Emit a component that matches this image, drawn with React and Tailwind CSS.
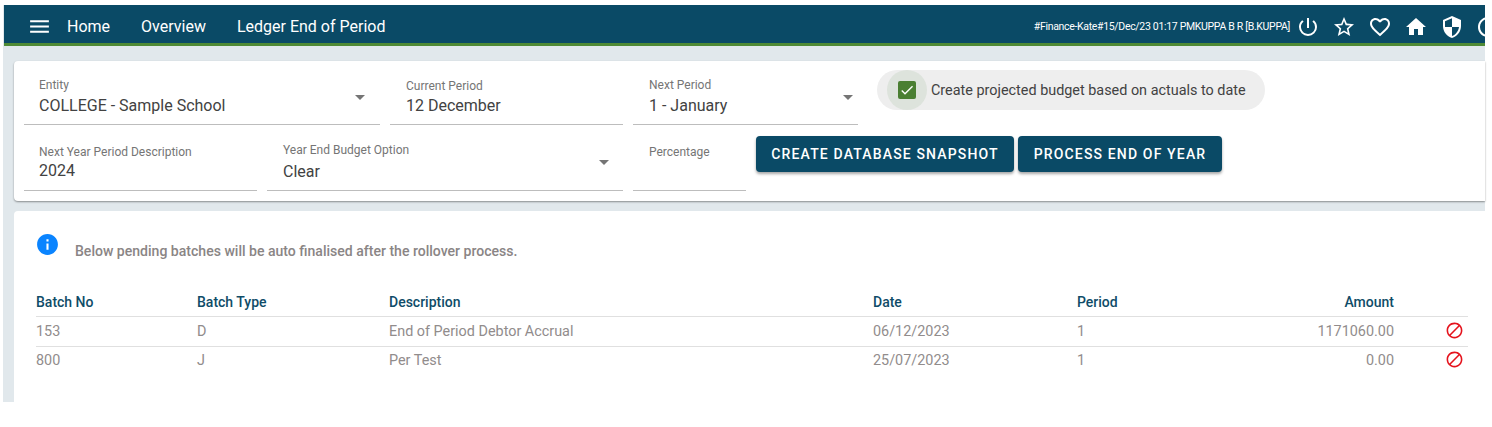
import { MdMenu, MdPowerSettingsNew, MdStarBorder, MdFavoriteBorder, MdHome, MdSecurity, MdAccessTime, MdArrowDropDown, MdInfo, MdBlock, MdCheck } from "react-icons/md";

const ROWS = [
  { no: "153", type: "D", desc: "End of Period Debtor Accrual", date: "06/12/2023", period: "1", amount: "1171060.00" },
  { no: "800", type: "J", desc: "Per Test", date: "25/07/2023", period: "1", amount: "0.00" },
];

function Field({ label, value, width, select, inset = "pl-[16px]", labelTop = "pt-[9px]", valueTop = "mt-[4px]", arrowPos = "top-[16px] right-[8px]" }) {
  return (
    <div className={`relative h-[56px] shrink-0 border-b border-[#bdbdbd] ${width}`}>
      <div className={`${inset} ${labelTop}`}>
        <div className="text-[12px] leading-[14px] text-[#757575]">{label}</div>
        {value && <div className={`text-[16px] leading-[20px] text-[#424242] ${valueTop}`}>{value}</div>}
      </div>
      {select && <MdArrowDropDown size={24} className={`absolute text-[#757575] ${arrowPos}`} />}
    </div>
  );
}

function Button({ children, width }) {
  return (
    <button className={`h-[36px] rounded-[4px] bg-[#0a4a66] text-[14px] font-medium tracking-[1.15px] text-white shadow-[0_2px_3px_rgba(0,0,0,0.35)] ${width}`}>
      {children}
    </button>
  );
}

export default function App() {
  return (
    <div className="h-[427px] w-[1492px] overflow-hidden bg-white font-['Roboto',sans-serif]">
      <div className="ml-[3px] mt-[5px] h-[397px] w-[1482px] bg-[#e1e8ec]">
        <header className="ml-[1px] flex h-[41px] items-center overflow-hidden border-b-[3px] border-[#4f8a35] bg-[#0a4a66] pt-[5px] text-white">
          <MdMenu size={25} className="ml-[23px] shrink-0" />
          <nav className="ml-[15px] mt-[1px] flex gap-[31px] text-[16px]">
            <span>Home</span>
            <span>Overview</span>
            <span>Ledger End of Period</span>
          </nav>
          <span className="ml-auto whitespace-nowrap text-[10.5px] tracking-[-0.32px]">#Finance-Kate#15/Dec/23 01:17 PMKUPPA B R [B.KUPPA]</span>
          <div className="ml-[6px] mr-[-15px] flex shrink-0 items-center gap-[12px]">
            <MdPowerSettingsNew size={24} />
            <MdStarBorder size={24} />
            <MdFavoriteBorder size={24} />
            <MdHome size={24} />
            <MdSecurity size={24} />
            <MdAccessTime size={24} />
          </div>
        </header>

        <div className="pl-[11px] pt-[15px]">
          <section className="h-[140px] rounded-l-[4px] bg-white pl-[10px] pt-[8px] shadow-[0_1px_2px_rgba(0,0,0,0.4)]">
            <div className="flex gap-[10px]">
              <Field label="Entity" value="COLLEGE - Sample School" width="w-[356px]" inset="pl-[15px]" select />
              <Field label="Current Period" value="12 December" width="w-[233px]" labelTop="pt-[10px]" valueTop="mt-[3px]" />
              <Field label="Next Period" value="1 - January" width="w-[225px]" select arrowPos="top-[16px] right-[-2px]" />
              <label className="ml-[9px] mt-[1px] flex h-[40px] w-[388px] items-center self-start rounded-full bg-[#eeeeee]">
                <span className="ml-[10px] flex h-[40px] w-[40px] items-center justify-center rounded-full bg-[#dde3dc]">
                  <span className="flex h-[18px] w-[18px] items-center justify-center rounded-[2px] bg-[#4a7f32] text-white">
                    <MdCheck size={16} />
                  </span>
                </span>
                <span className="ml-[4px] mt-[1px] text-[14.4px] text-[#424242]">Create projected budget based on actuals to date</span>
              </label>
            </div>
            <div className="mt-[10px] flex gap-[10px]">
              <Field label="Next Year Period Description" value="2024" width="w-[233px]" inset="pl-[15px]" labelTop="pt-[10px]" valueTop="mt-[2px]" />
              <Field label="Year End Budget Option" value="Clear" width="w-[356px]" select labelTop="pt-[8px]" valueTop="mt-[5px]" arrowPos="top-[15px] right-[7px]" />
              <Field label="Percentage" width="w-[113px]" labelTop="pt-[10px]" />
              <div className="flex gap-[4px] pt-[1px]">
                <Button width="w-[258px]">CREATE DATABASE SNAPSHOT</Button>
                <Button width="w-[204px]">PROCESS END OF YEAR</Button>
              </div>
            </div>
          </section>

          <section className="mt-[10px] h-[191px] rounded-tl-[4px] bg-white pl-[22px] pr-[17px]">
            <div className="flex pt-[21px]">
              <MdInfo size={25} className="ml-[-1px] shrink-0 text-[#0a84ff]" />
              <p className="ml-[15px] mt-[9px] text-[14.05px] font-medium leading-[20px] text-[#8a8585]">Below pending batches will be auto finalised after the rollover process.</p>
            </div>
            <table className="mt-[27px] w-[1432px] table-fixed text-left text-[14.4px]">
              <colgroup>
                <col className="w-[161px]" />
                <col className="w-[192px]" />
                <col className="w-[484px]" />
                <col className="w-[204px]" />
                <col className="w-[100px]" />
                <col className="w-[217px]" />
                <col className="w-[74px]" />
              </colgroup>
              <thead>
                <tr className="h-[28px] border-b border-[#e0e0e0] text-[14px] font-medium text-[#0f4c68] [&>th]:pt-[2px]">
                  <th className="font-medium">Batch No</th>
                  <th className="font-medium">Batch Type</th>
                  <th className="font-medium">Description</th>
                  <th className="font-medium">Date</th>
                  <th className="font-medium">Period</th>
                  <th className="text-right font-medium">Amount</th>
                  <th />
                </tr>
              </thead>
              <tbody className="text-[#918c8c]">
                {ROWS.map((r, i) => (
                  <tr key={r.no} className={`h-[30px] ${i === 0 ? "border-b border-[#e0e0e0] [&>td]:pt-[2px]" : ""}`}>
                    <td>{r.no}</td>
                    <td>{r.type}</td>
                    <td>{r.desc}</td>
                    <td>{r.date}</td>
                    <td>{r.period}</td>
                    <td className="text-right">{r.amount}</td>
                    <td><MdBlock size={19} className="mb-[3px] ml-[51px] text-[#e5131d]" /></td>
                  </tr>
                ))}
              </tbody>
            </table>
          </section>
        </div>
      </div>
    </div>
  );
}
